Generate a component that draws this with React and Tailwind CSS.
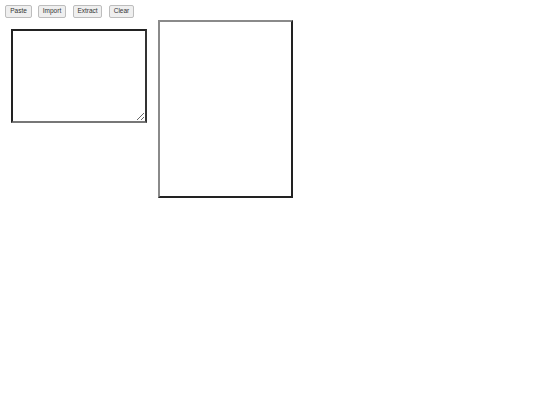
import React from 'react';

const Btn = ({ children, className }) => (
  <button className={`block h-[13px] rounded-[2px] border border-[#bdbdbd] bg-[#efefef] text-[6.5px] leading-none text-[#333] ${className}`}>
    {children}
  </button>
);

const App = () => {
  return (
    <div className="w-[540px] h-[405px] bg-white font-['Liberation_Sans',Arial,sans-serif]">
      <div className="flex items-start pl-[5px] pt-[5px]">
        <Btn className="w-[27px]">Paste</Btn>
        <Btn className="ml-[6px] w-[28px]">Import</Btn>
        <Btn className="ml-[7px] w-[29px]">Extract</Btn>
        <Btn className="ml-[7px] w-[25px]">Clear</Btn>
      </div>
      <div className="flex items-start pt-[2px]">
        <textarea className="block ml-[11px] mt-[9px] w-[136px] h-[94px] border-2 border-t-[#222] border-l-[#222] border-r-[#333] border-b-[#777] bg-white outline-none" />
        <div className="ml-[11px] w-[135px] h-[178px] border-2 border-t-[#8a8a8a] border-l-[#8a8a8a] border-r-[#222] border-b-[#222] bg-white" />
      </div>
    </div>
  );
};

export default App;
